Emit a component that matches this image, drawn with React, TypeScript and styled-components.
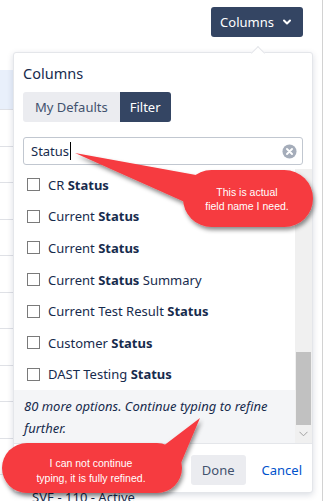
import styled, { createGlobalStyle } from "styled-components";
import { ChevronDown } from "lucide-react";

const GlobalStyle = createGlobalStyle`
  html, body {
    margin: 0;
    padding: 0;
    background: #fff;
  }
  body {
    font-family: "Noto Sans", "Open Sans", sans-serif;
    color: #172b4d;
  }
`;

const options = [
  { before: "CR ", match: "Status", after: "" },
  { before: "Current ", match: "Status", after: "" },
  { before: "Current ", match: "Status", after: "" },
  { before: "Current ", match: "Status", after: " Summary" },
  { before: "Current Test Result ", match: "Status", after: "" },
  { before: "Customer ", match: "Status", after: "" },
  { before: "DAST Testing ", match: "Status", after: "" },
];

const tableRows = 12;

const App = () => {
  return (
    <>
      <GlobalStyle />
      <Page>
        <TopBar>
          <ColumnsButton>
            Columns
            <ChevronDown size={12} strokeWidth={4} />
          </ColumnsButton>
        </TopBar>

        <Table>
          {Array.from({ length: tableRows }).map((_, i) => (
            <TableRow key={i} $selected={i === 0}>
              {i === tableRows - 1 ? "SVE - 110 - Active" : ""}
            </TableRow>
          ))}
        </Table>

        <Panel>
          <PanelNotch />
          <PanelHeader>
            <Title>Columns</Title>
            <Segmented>
              <Segment>My Defaults</Segment>
              <Segment $active>Filter</Segment>
            </Segmented>
            <SearchBox>
              <SearchText>
                Status
                <Caret />
              </SearchText>
              <ClearIcon width="15" height="15" viewBox="0 0 16 16">
                <circle cx="8" cy="8" r="7.5" fill="#a5adba" />
                <path
                  d="M5.3 5.3 L10.7 10.7 M10.7 5.3 L5.3 10.7"
                  stroke="#fff"
                  strokeWidth="2"
                  strokeLinecap="round"
                />
              </ClearIcon>
            </SearchBox>
          </PanelHeader>

          <ScrollArea>
            <ListColumn>
              {options.map((opt, i) => (
                <OptionRow key={i}>
                  <Checkbox />
                  <OptionLabel>
                    {opt.before}
                    <strong>{opt.match}</strong>
                    {opt.after}
                  </OptionLabel>
                </OptionRow>
              ))}
              <MoreNote>
                80 more options. Continue typing to refine further.
              </MoreNote>
            </ListColumn>
            <ScrollTrack>
              <ScrollThumb />
              <ScrollArrow>
                <svg width="9" height="6" viewBox="0 0 9 6">
                  <path d="M0.5 0.8 L4.5 4.8 L8.5 0.8" fill="none" stroke="#a0a0a0" strokeWidth="1" />
                </svg>
              </ScrollArrow>
            </ScrollTrack>
          </ScrollArea>

          <PanelFooter>
            <DoneButton>Done</DoneButton>
            <CancelButton>Cancel</CancelButton>
          </PanelFooter>
        </Panel>

        <Annotations width="325" height="501" viewBox="0 0 325 501">
          <defs>
            <filter id="callout-shadow" x="-20%" y="-30%" width="140%" height="170%">
              <feDropShadow dx="1.5" dy="3" stdDeviation="2" floodColor="#000" floodOpacity="0.45" />
            </filter>
          </defs>
          <g filter="url(#callout-shadow)" fill="#f63b40">
            <rect x="183" y="170" width="130" height="57" rx="28.5" />
            <polygon points="75,153 196,175 187,203" />
          </g>
          <CalloutText x="247" y="196">This is actual</CalloutText>
          <CalloutText x="247" y="210">field name I need.</CalloutText>

          <g filter="url(#callout-shadow)" fill="#f63b40">
            <rect x="2" y="443" width="180" height="50" rx="25" />
            <polygon points="200,418 158,450 181,463" />
          </g>
          <CalloutText x="91" y="467">I can not continue</CalloutText>
          <CalloutText x="91" y="482">typing, it is fully refined.</CalloutText>
        </Annotations>
      </Page>
    </>
  );
};

export default App;

const Page = styled.div`
  position: relative;
  width: 322px;
  height: 501px;
  overflow: hidden;
  background: #fff;
  border-right: 1px solid #d2d2d2;
`;

const TopBar = styled.div`
  display: flex;
  justify-content: flex-end;
  padding: 7px 19px 0 0;
  height: 37px;
`;

const ColumnsButton = styled.button`
  display: flex;
  align-items: center;
  gap: 7px;
  height: 30px;
  padding: 0 10px 0 9px;
  border: none;
  border-radius: 3px;
  background: #344563;
  color: #fff;
  font-family: inherit;
  font-size: 13px;
`;

const Table = styled.div`
  margin-top: 26px;
  width: 300px;
`;

const TableRow = styled.div<{ $selected?: boolean }>`
  height: ${(p) => (p.$selected ? "40px" : "36.5px")};
  box-sizing: border-box;
  border-bottom: 1px solid #dfe1e6;
  background: ${(p) => (p.$selected ? "#e9f0fb" : "#fff")};
  padding: 13px 0 0 32px;
  font-size: 13px;
  color: #172b4d;
`;

const Panel = styled.div`
  position: absolute;
  left: 13px;
  top: 52px;
  width: 300px;
  height: 441px;
  box-sizing: border-box;
  display: flex;
  flex-direction: column;
  background: #fff;
  border: 1px solid #e4e6ea;
  border-radius: 3px;
  box-shadow: 0 2px 6px rgba(9, 30, 66, 0.15);
`;

const PanelNotch = styled.div`
  position: absolute;
  top: -5px;
  left: 239px;
  width: 9px;
  height: 9px;
  background: #fff;
  border-top: 1px solid #e4e6ea;
  border-left: 1px solid #e4e6ea;
  transform: rotate(45deg);
`;

const PanelHeader = styled.div`
  padding: 10px 9px 0;
  display: flex;
  flex-direction: column;
  align-items: flex-start;
`;

const Title = styled.div`
  font-size: 14.5px;
  line-height: 20px;
  color: #172b4d;
`;

const Segmented = styled.div`
  display: flex;
  margin-top: 9px;
  border-radius: 3px;
  overflow: hidden;
`;

const Segment = styled.div<{ $active?: boolean }>`
  height: 30px;
  display: flex;
  align-items: center;
  padding: ${(p) => (p.$active ? "0 10px" : "0 12px")};
  font-size: 13px;
  background: ${(p) => (p.$active ? "#344563" : "#ebecf0")};
  color: ${(p) => (p.$active ? "#fff" : "#42526e")};
`;

const SearchBox = styled.div`
  margin-top: 15px;
  width: 280px;
  height: 28px;
  box-sizing: border-box;
  display: flex;
  align-items: center;
  justify-content: space-between;
  padding: 0 5px 0 7px;
  border: 1px solid #c1c7d0;
  border-radius: 3px;
`;

const SearchText = styled.span`
  display: flex;
  align-items: center;
  font-size: 13px;
  color: #172b4d;
`;

const Caret = styled.span`
  display: inline-block;
  width: 1px;
  height: 18px;
  background: #000;
  margin-left: 1px;
`;

const ClearIcon = styled.svg`
  display: block;
`;

const ScrollArea = styled.div`
  margin-top: 4px;
  height: 274px;
  display: flex;
`;

const ListColumn = styled.div`
  flex: 1;
  display: flex;
  flex-direction: column;
`;

const OptionRow = styled.div`
  height: 31.6px;
  display: flex;
  align-items: center;
  gap: 8px;
  padding-left: 13px;
`;

const Checkbox = styled.span`
  width: 11px;
  height: 11px;
  border: 1px solid #7a7a7a;
  background: #fff;
  flex-shrink: 0;
`;

const OptionLabel = styled.span`
  font-size: 13px;
  color: #172b4d;

  strong {
    font-weight: 700;
  }
`;

const MoreNote = styled.div`
  flex: 1;
  background: #f4f5f7;
  padding: 5px 10px 0 10px;
  font-size: 13px;
  font-style: italic;
  line-height: 22px;
  color: #172b4d;
`;

const ScrollTrack = styled.div`
  width: 17px;
  display: flex;
  flex-direction: column;
  background: #f0f0f0;
`;

const ScrollThumb = styled.div`
  margin: 183px 1px 0;
  height: 73px;
  background: #c1c1c1;
`;

const ScrollArrow = styled.div`
  flex: 1;
  display: flex;
  align-items: center;
  justify-content: center;
`;

const PanelFooter = styled.div`
  flex: 1;
  border-top: 1px solid #e4e6ea;
  display: flex;
  align-items: flex-start;
  justify-content: flex-end;
  gap: 8px;
  padding: 11px 2px 0 0;
`;

const DoneButton = styled.button`
  height: 30px;
  padding: 0 11px;
  border: none;
  border-radius: 3px;
  background: #ebecf0;
  color: #42526e;
  font-family: inherit;
  font-size: 13px;
`;

const CancelButton = styled.button`
  height: 30px;
  padding: 0 8px;
  border: none;
  background: transparent;
  color: #0052cc;
  font-family: inherit;
  font-size: 13px;
`;

const Annotations = styled.svg`
  position: absolute;
  left: 0;
  top: 0;
  pointer-events: none;
`;

const CalloutText = styled.text`
  fill: #fff;
  font-family: "Liberation Sans", Arial, sans-serif;
  font-size: 10.5px;
  text-anchor: middle;
`;
